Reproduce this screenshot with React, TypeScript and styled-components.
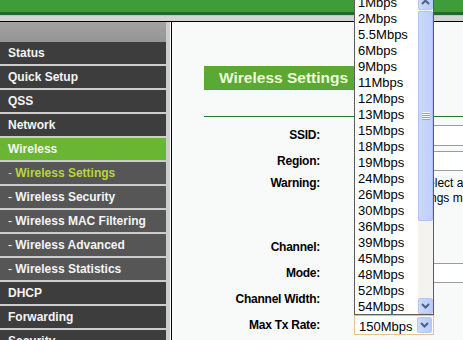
import React from 'react';
import styled, { createGlobalStyle } from 'styled-components';

const Global = createGlobalStyle`
  html, body { margin: 0; padding: 0; overflow: hidden; background: #f8f9f9; }
  body { font-family: "Liberation Sans", Arial, sans-serif; }
  #root { width: 463px; height: 340px; overflow: hidden; }
`;

const Page = styled.div`
  width: 463px;
  height: 340px;
  overflow: hidden;
  display: flex;
  flex-direction: column;
`;

const Banner = styled.header`
  flex: none;
  height: 12px;
  background: #409b3a;
  border-bottom: 3px solid #1f6a2e;
`;

const BannerShade = styled.div`
  flex: none;
  height: 5px;
  background: #d4d4d4;
  border-top: 1px solid #c4c4c4;
  border-bottom: 1px solid #000;
`;

const Main = styled.div`
  flex: 1;
  min-height: 0;
  display: flex;
`;

const Sidebar = styled.nav`
  flex: none;
  width: 170px;
  box-sizing: border-box;
  padding-right: 4px;
  background: #cdcdcd;
  display: flex;
  flex-direction: column;
`;

const SideHeader = styled.div`
  flex: none;
  height: 20px;
  background: linear-gradient(#a2a2a2, #959595);
`;

type Kind = 'main' | 'active' | 'sub' | 'subActive';

const bgFor: Record<Kind, string> = {
  main: '#3d3d3d',
  active: '#69b632',
  sub: '#565656',
  subActive: '#565656',
};

const MenuItem = styled.div<{ $kind: Kind }>`
  flex: none;
  height: 22px;
  line-height: 22px;
  border-bottom: 2px solid #cdcdcd;
  padding-left: 8px;
  background: ${(p) => bgFor[p.$kind]};
  color: ${(p) => (p.$kind === 'subActive' ? '#b7d63a' : '#f4f4f4')};
  font-size: 12px;
  font-weight: bold;
  white-space: nowrap;
`;

const Dash = styled.span`
  font-weight: normal;
`;

const Content = styled.main`
  flex: 1;
  min-width: 0;
  margin-left: 1px;
  border-left: 1px solid #000;
  background: #f8f9f9;
  padding: 44px 0 0 32px;
`;

const Inner = styled.div`
  width: 420px;
`;

const TitleBar = styled.h1`
  margin: 0;
  width: 216px;
  height: 24px;
  line-height: 24px;
  padding-left: 15px;
  box-sizing: border-box;
  background: #5aa934;
  color: #eefbd6;
  font-size: 15.5px;
  font-weight: bold;
  white-space: nowrap;
`;

const Divider = styled.div`
  margin-top: 26px;
  height: 1px;
  background: #1f7a3c;
`;

const Form = styled.div`
  margin-top: 5px;
  display: flex;
  flex-direction: column;
`;

const Row = styled.div<{ $h: number; $top?: boolean }>`
  flex: none;
  height: ${(p) => p.$h}px;
  display: grid;
  grid-template-columns: 116px 1fr;
  column-gap: 34px;
  align-items: ${(p) => (p.$top ? 'start' : 'center')};
  padding-top: ${(p) => (p.$top ? 2 : 0)}px;
  box-sizing: border-box;
`;

const Label = styled.div`
  text-align: right;
  font-size: 12px;
  font-weight: bold;
  letter-spacing: -0.25px;
  color: #000;
  line-height: 15px;
  white-space: nowrap;
`;

const TextField = styled.input`
  width: 200px;
  height: 21px;
  box-sizing: border-box;
  border: 1px solid #9c9c9c;
  background: #fff;
  padding: 0 0 0 3px;
  font: 12px "Liberation Sans", Arial, sans-serif;
  color: #000;
`;

const FakeSelect = styled.div<{ $w: number; $h?: number }>`
  position: relative;
  width: ${(p) => p.$w}px;
  height: ${(p) => p.$h ?? 20}px;
  box-sizing: border-box;
  border: 1px solid #9c9c9c;
  background: #fff;
  display: flex;
  align-items: center;
  padding-left: 3px;
  font-size: 12px;
  color: #000;
`;

const Warning = styled.div`
  font-size: 12px;
  line-height: 15px;
  color: #000;
  padding-left: 4px;
  white-space: nowrap;
`;

const RateSelect = styled.div`
  position: relative;
  width: 80px;
  height: 20px;
  box-sizing: border-box;
  border: 1px solid #e2c48e;
  background: #fff;
  display: flex;
  align-items: center;
  justify-content: space-between;
  padding-left: 4px;
  font-size: 13px;
  color: #000;
`;

const RateValue = styled.span`
  padding-top: 2px;
`;

const XpButton = styled.div`
  flex: none;
  width: 15px;
  height: 16px;
  box-sizing: border-box;
  border: 1px solid #b3c7f5;
  border-radius: 2px;
  background: linear-gradient(90deg, #cbdafd, #b7cbf9);
  display: flex;
  align-items: center;
  justify-content: center;
`;

const SelectButton = styled(XpButton)`
  margin-right: 1px;
`;

const DropList = styled.div`
  position: absolute;
  left: -1px;
  bottom: calc(100% + 1px);
  width: 80px;
  box-sizing: border-box;
  border: 1px solid #5c5c5c;
  background: #fff;
  display: flex;
  z-index: 10;
`;

const Options = styled.div`
  flex: 1;
  display: flex;
  flex-direction: column;
`;

const Option = styled.div`
  flex: none;
  height: 16px;
  box-sizing: border-box;
  padding: 2px 0 0 3px;
  line-height: 14px;
  font-size: 13px;
  color: #000;
  white-space: nowrap;
`;

const ScrollBar = styled.div`
  flex: none;
  width: 15px;
  background: #f4f3ef;
  display: flex;
  flex-direction: column;
`;

const Thumb = styled.div`
  flex: none;
  margin-top: 1px;
  height: 210px;
  box-sizing: border-box;
  border: 1px solid #adc2f2;
  border-radius: 2px;
  background: linear-gradient(90deg, #cad9fd, #bccffb);
  display: flex;
  align-items: center;
  justify-content: center;
`;

const Track = styled.div`
  flex: 1;
`;

const Chevron = ({ up }: { up?: boolean }) => (
  <svg width="9" height="6" viewBox="0 0 9 6">
    <path
      d={up ? 'M1 5 L4.5 1.5 L8 5' : 'M1 1 L4.5 4.5 L8 1'}
      fill="none"
      stroke="#4d6185"
      strokeWidth="2"
    />
  </svg>
);

const Grip = () => (
  <svg width="8" height="8" viewBox="0 0 8 8">
    {[0.5, 2.5, 4.5, 6.5].map((y) => (
      <line key={y} x1="0" x2="8" y1={y} y2={y} stroke="#eef3fe" strokeWidth="1" />
    ))}
    {[1.5, 3.5, 5.5, 7.5].map((y) => (
      <line key={y} x1="0" x2="8" y1={y} y2={y} stroke="#8ea8e4" strokeWidth="1" />
    ))}
  </svg>
);

const menu: { text: string; kind: Kind; sub?: boolean }[] = [
  { text: 'Status', kind: 'main' },
  { text: 'Quick Setup', kind: 'main' },
  { text: 'QSS', kind: 'main' },
  { text: 'Network', kind: 'main' },
  { text: 'Wireless', kind: 'active' },
  { text: 'Wireless Settings', kind: 'subActive', sub: true },
  { text: 'Wireless Security', kind: 'sub', sub: true },
  { text: 'Wireless MAC Filtering', kind: 'sub', sub: true },
  { text: 'Wireless Advanced', kind: 'sub', sub: true },
  { text: 'Wireless Statistics', kind: 'sub', sub: true },
  { text: 'DHCP', kind: 'main' },
  { text: 'Forwarding', kind: 'main' },
  { text: 'Security', kind: 'main' },
];

const rates = [
  '1Mbps', '2Mbps', '5.5Mbps', '6Mbps', '9Mbps', '11Mbps', '12Mbps', '13Mbps',
  '15Mbps', '18Mbps', '19Mbps', '24Mbps', '26Mbps', '30Mbps', '36Mbps', '39Mbps',
  '45Mbps', '48Mbps', '52Mbps', '54Mbps',
];

export default function App() {
  return (
    <Page>
      <Global />
      <Banner />
      <BannerShade />
      <Main>
        <Sidebar>
          <SideHeader />
          {menu.map((m) => (
            <MenuItem key={m.text} $kind={m.kind}>
              {m.sub && <Dash>- </Dash>}
              {m.text}
            </MenuItem>
          ))}
        </Sidebar>
        <Content>
          <Inner>
            <TitleBar>Wireless Settings</TitleBar>
            <Divider />
            <Form>
              <Row $h={26}>
                <Label>SSID:</Label>
                <TextField readOnly value="TP-LINK" />
              </Row>
              <Row $h={26}>
                <Label>Region:</Label>
                <FakeSelect $w={200}>United States</FakeSelect>
              </Row>
              <Row $h={60} $top>
                <Label>Warning:</Label>
                <Warning>
                  Ensure you select a correct country to conform local law.
                  <br />
                  Incorrect settings may cause interference.
                </Warning>
              </Row>
              <Row $h={26}>
                <Label>Channel:</Label>
                <FakeSelect $w={60}>Auto</FakeSelect>
              </Row>
              <Row $h={26}>
                <Label>Mode:</Label>
                <FakeSelect $w={200}>11bgn mixed</FakeSelect>
              </Row>
              <Row $h={26}>
                <Label>Channel Width:</Label>
                <FakeSelect $w={70}>Auto</FakeSelect>
              </Row>
              <Row $h={26}>
                <Label>Max Tx Rate:</Label>
                <RateSelect>
                  <RateValue>150Mbps</RateValue>
                  <SelectButton>
                    <Chevron />
                  </SelectButton>
                  <DropList>
                    <Options>
                      {rates.map((r) => (
                        <Option key={r}>{r}</Option>
                      ))}
                    </Options>
                    <ScrollBar>
                      <XpButton>
                        <Chevron up />
                      </XpButton>
                      <Thumb>
                        <Grip />
                      </Thumb>
                      <Track />
                      <XpButton>
                        <Chevron />
                      </XpButton>
                    </ScrollBar>
                  </DropList>
                </RateSelect>
              </Row>
            </Form>
          </Inner>
        </Content>
      </Main>
    </Page>
  );
}
